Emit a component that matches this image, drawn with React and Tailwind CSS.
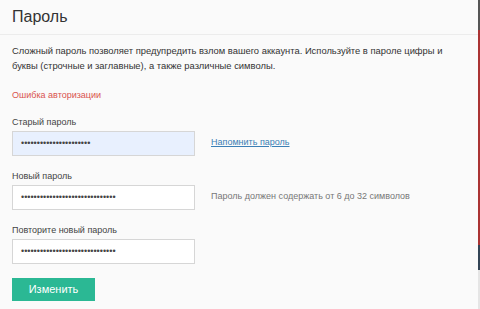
const Field = ({ label, dots, autofill, aside, link }) => {
  return (
    <div className="mt-[15px] first:mt-0">
      <p className="text-[9px] leading-[11px] text-[#444]">{label}</p>
      <div className="mt-[3px] flex items-center">
        <div
          className={
            "flex h-[25px] w-[183px] items-center border border-[#d6d6d6] pl-[8px] " +
            (autofill ? "bg-[#e8f0fe]" : "bg-white")
          }
        >
          <span className="text-[9px] leading-none text-[#444]">
            {"•".repeat(dots)}
          </span>
        </div>
        {aside && (
          <span
            className={
              "ml-[16px] text-[9px] " +
              (link ? "text-[#3b7fb5] underline" : "text-[#777]")
            }
          >
            {aside}
          </span>
        )}
      </div>
    </div>
  );
};

const App = () => {
  return (
    <div
      className="flex h-[309px] w-[480px] overflow-hidden bg-[#fafafa]"
      style={{ fontFamily: '"Liberation Sans", Arial, sans-serif' }}
    >
      <div className="flex-1">
        <div className="flex h-[35px] items-center border-b border-[#ececec] px-[12px]">
          <h1 className="text-[16px] text-[#333]">Пароль</h1>
        </div>
        <div className="px-[12px] pt-[8px]">
          <p className="text-[9.4px] leading-[15px] text-[#333]">
            Сложный пароль позволяет предупредить взлом вашего аккаунта. Используйте в пароле цифры и
            буквы (строчные и заглавные), а также различные символы.
          </p>
          <p className="mt-[16px] text-[9px] text-[#d9534f]">Ошибка авторизации</p>
          <div className="mt-[14px]">
            <Field label="Старый пароль" dots={22} autofill aside="Напомнить пароль" link />
            <Field label="Новый пароль" dots={30} aside="Пароль должен содержать от 6 до 32 символов" />
            <Field label="Повторите новый пароль" dots={30} />
          </div>
          <button className="mt-[14px] h-[23px] w-[83px] bg-[#2bb894] text-[11px] text-white">
            Изменить
          </button>
        </div>
      </div>
      <div className="flex w-[2px] flex-col">
        <div className="h-[30px] bg-[#555]" />
        <div className="flex-1 bg-[#a33]" />
        <div className="h-[25px] bg-[#345]" />
        <div className="h-[39px] bg-[#e5e5e5]" />
      </div>
    </div>
  );
};

export default App;
